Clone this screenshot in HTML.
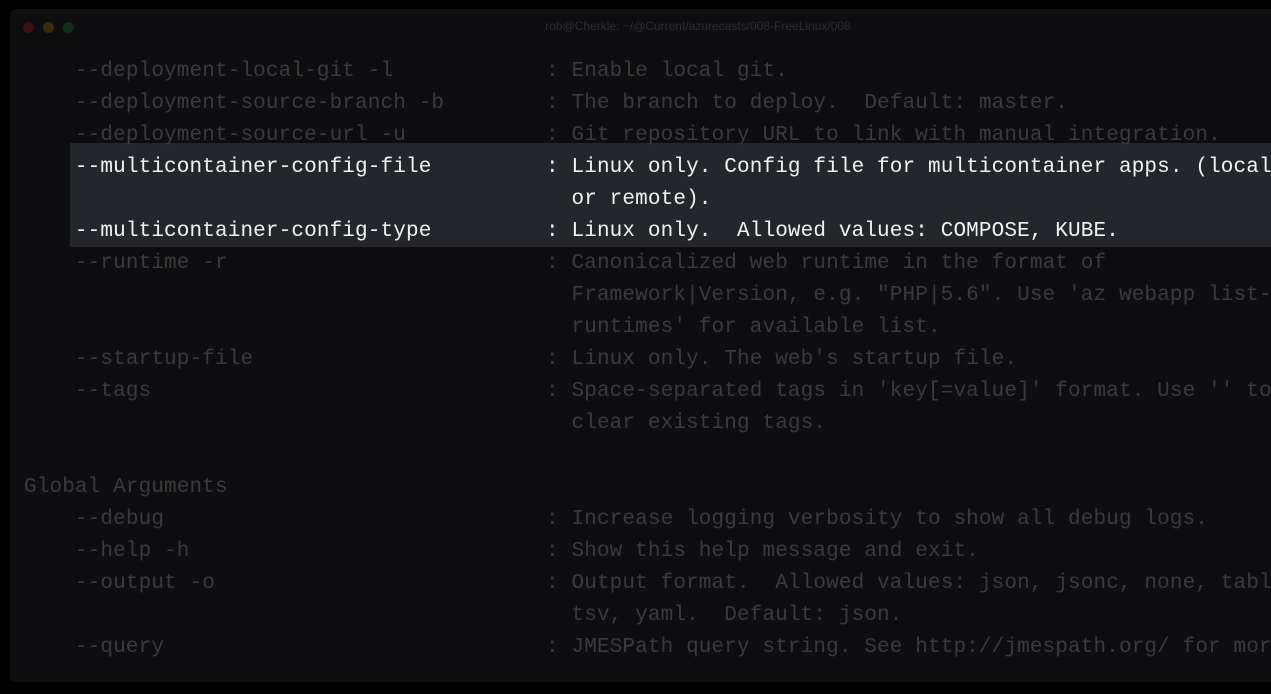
<!DOCTYPE html>
<html><head><style>
html,body{margin:0;padding:0;background:#000;width:1271px;height:694px;overflow:hidden}
.win{position:absolute;left:10px;top:9px;width:1270px;height:673px;background:#0e0e11;border-radius:6px;overflow:hidden}
.dot{position:absolute;top:13px;width:11px;height:11px;border-radius:50%}
.title{position:absolute;top:10px;left:0;width:1376px;text-align:center;font:12px "Liberation Sans",sans-serif;color:#2c2c2f}
.hl{position:absolute;left:60px;top:134px;width:1220px;height:104px;background:#23272c}
.l{position:absolute;left:14px;white-space:pre;font:21px/32px "Liberation Mono",monospace;color:#3b3b3d;letter-spacing:0.13px}
.b{color:#f2f2f2}
</style></head><body>
<div class="win">
<div class="dot" style="left:13px;background:#3a1412"></div>
<div class="dot" style="left:33px;background:#3a2a0c"></div>
<div class="dot" style="left:53px;background:#113014"></div>
<div class="title">rob@Cherkle: ~/@Current/azurecasts/008-FreeLinux/008</div>
<div class="hl"></div>
<div class="l" style="top:47px">    --deployment-local-git -l            : Enable local git.</div>
<div class="l" style="top:79px">    --deployment-source-branch -b        : The branch to deploy.  Default: master.</div>
<div class="l" style="top:111px">    --deployment-source-url -u           : Git repository URL to link with manual integration.</div>
<div class="l b" style="top:143px">    --multicontainer-config-file         : Linux only. Config file for multicontainer apps. (local</div>
<div class="l b" style="top:175px">                                           or remote).</div>
<div class="l b" style="top:207px">    --multicontainer-config-type         : Linux only.  Allowed values: COMPOSE, KUBE.</div>
<div class="l" style="top:239px">    --runtime -r                         : Canonicalized web runtime in the format of</div>
<div class="l" style="top:271px">                                           Framework|Version, e.g. "PHP|5.6". Use 'az webapp list-</div>
<div class="l" style="top:303px">                                           runtimes' for available list.</div>
<div class="l" style="top:335px">    --startup-file                       : Linux only. The web's startup file.</div>
<div class="l" style="top:367px">    --tags                               : Space-separated tags in 'key[=value]' format. Use '' to</div>
<div class="l" style="top:399px">                                           clear existing tags.</div>
<div class="l" style="top:463px">Global Arguments</div>
<div class="l" style="top:495px">    --debug                              : Increase logging verbosity to show all debug logs.</div>
<div class="l" style="top:527px">    --help -h                            : Show this help message and exit.</div>
<div class="l" style="top:559px">    --output -o                          : Output format.  Allowed values: json, jsonc, none, table,</div>
<div class="l" style="top:591px">                                           tsv, yaml.  Default: json.</div>
<div class="l" style="top:623px">    --query                              : JMESPath query string. See http://jmespath.org/ for more</div>
</div>
</body></html>
